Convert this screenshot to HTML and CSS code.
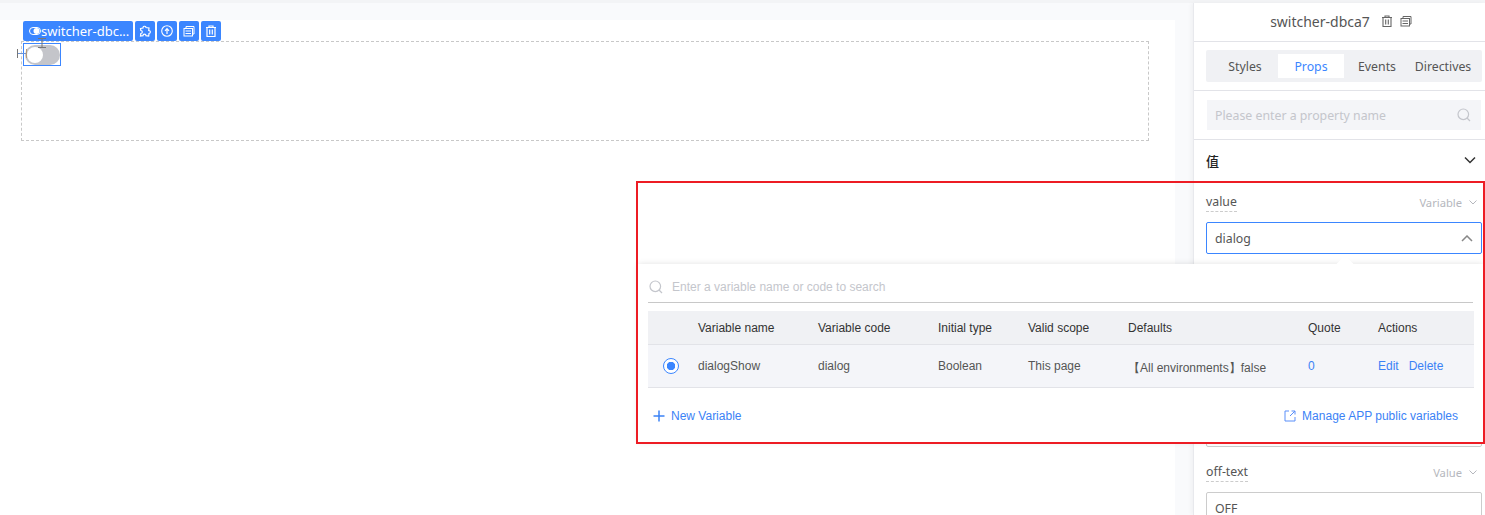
FILE: index.html
```html
<!DOCTYPE html>
<html lang="en">
<head>
    <meta charset="UTF-8">
    <meta name="viewport" content="width=device-width, initial-scale=1.0">
    <title>switcher-dbca7</title>
    <link rel="stylesheet" href="styles.css">
</head>
<body>
    <div class="app">
        <main class="stage">
            <div class="canvas">
                <div class="drop-zone"></div>

                <!-- selected component toolbar -->
                <div class="tool-bar">
                    <div class="tool-name">
                        <svg class="name-icon" viewBox="0 0 12 12" width="12" height="12"><rect x="0.5" y="2.5" width="11" height="7" rx="3.5" fill="none" stroke="#fff"/><circle cx="7.5" cy="6" r="3" fill="#fff"/></svg>
                        <span>switcher-dbc...</span>
                    </div>
                    <button class="tool-btn">
                        <svg viewBox="0 0 14 14" width="14" height="14"><path d="M2.5 4.5 5 4a1.5 1.5 0 0 1 3-.5l3 .5-.3 2.5a1.5 1.5 0 0 1 .3 3l-.3 2.5-2.7-.3a1.5 1.5 0 0 0-3 0L2.5 12l.3-2.5a1.5 1.5 0 0 0 0-3z" fill="none" stroke="#fff" stroke-width="1.2"/></svg>
                    </button>
                    <button class="tool-btn">
                        <svg viewBox="0 0 14 14" width="14" height="14"><circle cx="7" cy="7" r="5.3" fill="none" stroke="#fff" stroke-width="1.1"/><path d="M7 10V5M5 6.8 7 4.6l2 2.2" fill="none" stroke="#fff" stroke-width="1.2"/></svg>
                    </button>
                    <button class="tool-btn">
                        <svg viewBox="0 0 14 14" width="14" height="14"><path d="M4 4V2.5h8V10h-1.5" fill="none" stroke="#fff"/><rect x="2" y="4.5" width="8.5" height="7.5" fill="none" stroke="#fff"/><path d="M3.5 7H9M3.5 9.5H9" stroke="#fff"/></svg>
                    </button>
                    <button class="tool-btn">
                        <svg viewBox="0 0 14 14" width="14" height="14"><path d="M2 3.5h10M5 3.5V2h4v1.5M3 3.5v9h8v-9M5.7 5.5v5M8.3 5.5v5" fill="none" stroke="#fff" stroke-width="1.2"/></svg>
                    </button>
                </div>

                <div class="selected-box">
                    <div class="switcher"><span class="switcher-dot"></span></div>
                </div>
                <svg class="margin-mark margin-left" viewBox="0 0 10 9" width="10" height="9"><path d="M.5 0v9" stroke="#777"/><path d="M1 4.5h8" stroke="#6b93d6"/><path d="M9.5 0v9" stroke="#b59a7a"/></svg>
                <svg class="margin-mark margin-top" viewBox="0 0 8 10" width="8" height="10"><path d="M0 .5h8M0 9.5h8M4 1v8" stroke="#777" fill="none"/></svg>
            </div>
        </main>

        <aside class="panel">
            <div class="panel-head">
                <span class="panel-title">switcher-dbca7</span>
                <svg viewBox="0 0 14 14" width="14" height="14"><path d="M2 3.5h10M5 3.5V2h4v1.5M3 3.5v9h8v-9M5.7 5.5v5M8.3 5.5v5" fill="none" stroke="#666" stroke-width="1.1"/></svg>
                <svg viewBox="0 0 14 14" width="14" height="14"><path d="M4 4V2.5h8V10h-1.5" fill="none" stroke="#666"/><rect x="2" y="4.5" width="8.5" height="7.5" fill="none" stroke="#666"/><path d="M3.5 7H9M3.5 9.5H9" stroke="#666"/></svg>
            </div>
            <div class="tabs-row">
                <div class="tabs">
                    <div class="tab">Styles</div>
                    <div class="tab active">Props</div>
                    <div class="tab">Events</div>
                    <div class="tab">Directives</div>
                </div>
            </div>
            <div class="search-row">
                <div class="prop-search">
                    <span>Please enter a property name</span>
                    <svg viewBox="0 0 14 14" width="14" height="14"><circle cx="6.3" cy="6.3" r="5.3" fill="none" stroke="#c4c6cc" stroke-width="1.2"/><path d="M10 10l3 3" stroke="#c4c6cc" stroke-width="1.2"/></svg>
                </div>
            </div>
            <div class="section-head">
                <span>值</span>
                <svg viewBox="0 0 12 8" width="12" height="8"><path d="M1 1.5l5 5 5-5" fill="none" stroke="#333" stroke-width="1.5"/></svg>
            </div>
            <div class="field">
                <div class="field-label">
                    <span class="field-name">value</span>
                    <span class="field-mode">Variable
                        <svg viewBox="0 0 8 5" width="8" height="5"><path d="M.5.5 4 4 7.5.5" fill="none" stroke="#b5b7bd"/></svg>
                    </span>
                </div>
                <div class="field-input focused">
                    <span>dialog</span>
                    <svg viewBox="0 0 12 7" width="12" height="7"><path d="M1 6l5-5 5 5" fill="none" stroke="#888" stroke-width="1.5"/></svg>
                </div>
            </div>
            <div class="field-input hidden-input"></div>
            <div class="field">
                <div class="field-label">
                    <span class="field-name">off-text</span>
                    <span class="field-mode">Value
                        <svg viewBox="0 0 8 5" width="8" height="5"><path d="M.5.5 4 4 7.5.5" fill="none" stroke="#b5b7bd"/></svg>
                    </span>
                </div>
                <div class="field-input"><span>OFF</span></div>
            </div>
        </aside>
    </div>

    <!-- variable picker popup -->
    <div class="popup">
        <div class="popup-arrow"></div>
        <div class="popup-search">
            <svg viewBox="0 0 14 14" width="14" height="14"><circle cx="6.3" cy="6.3" r="5.3" fill="none" stroke="#c4c6cc" stroke-width="1.2"/><path d="M10 10l3 3" stroke="#c4c6cc" stroke-width="1.2"/></svg>
            <span>Enter a variable name or code to search</span>
        </div>
        <div class="var-table">
            <div class="var-row var-header">
                <span></span>
                <span>Variable name</span>
                <span>Variable code</span>
                <span>Initial type</span>
                <span>Valid scope</span>
                <span>Defaults</span>
                <span>Quote</span>
                <span>Actions</span>
            </div>
            <div class="var-row var-body">
                <span class="radio"></span>
                <span>dialogShow</span>
                <span>dialog</span>
                <span>Boolean</span>
                <span>This page</span>
                <span class="defaults">【All environments】false</span>
                <span class="link">0</span>
                <span class="actions"><span class="link">Edit</span><span class="link">Delete</span></span>
            </div>
        </div>
        <div class="popup-foot">
            <span class="link foot-link">
                <svg viewBox="0 0 12 12" width="12" height="12"><path d="M6 .5v11M.5 6h11" stroke="#3b82f6" stroke-width="1.5"/></svg>
                New Variable
            </span>
            <span class="link foot-link">
                <svg viewBox="0 0 12 12" width="12" height="12"><path d="M5 1H1v10h10V7M6 6l5-5M7.5 1H11v3.5" fill="none" stroke="#5b8ff9"/></svg>
                Manage APP public variables
            </span>
        </div>
    </div>

    <div class="red-frame"></div>
</body>
</html>
```

FILE: styles.css
```css
* {
    box-sizing: border-box;
}
body {
    margin: 0;
    height: 515px;
    overflow: hidden;
    background-color: #fff;
    font-family: "Noto Sans", sans-serif;
    font-size: 12.3px;
    color: #555;
}
.app {
    display: flex;
    height: 515px;
    border-top: 3px solid #f3f4f6;
}
.stage {
    flex: 1;
    padding: 17px 18px 0 0;
    background-color: #f9fafc;
}
.canvas {
    position: relative;
    height: 100%;
    background-color: #fff;
    padding: 21px 26px 0 21px;
}
.drop-zone {
    height: 100px;
    border: 1px dashed #c8c8c8;
}
.tool-bar {
    position: absolute;
    top: 1px;
    left: 23px;
    display: flex;
    gap: 2px;
}
.tool-name {
    display: flex;
    align-items: center;
    width: 110px;
    height: 20px;
    padding-left: 6px;
    background-color: #3b86ff;
    border-radius: 2px;
    color: #fff;
    font-size: 13px;
    white-space: nowrap;
}
.tool-btn {
    display: flex;
    align-items: center;
    justify-content: center;
    width: 20px;
    height: 20px;
    padding: 0;
    border: none;
    border-radius: 2px;
    background-color: #3b86ff;
}
.selected-box {
    position: absolute;
    top: 23px;
    left: 23px;
    width: 38px;
    height: 23px;
    padding: 1px 0 0 1px;
    border: 1px solid #3b86ff;
}
.switcher {
    display: flex;
    align-items: center;
    width: 35px;
    height: 20px;
    padding-left: 2px;
    border-radius: 10px;
    background-color: #c4c5ca;
}
.switcher-dot {
    width: 16px;
    height: 16px;
    border-radius: 50%;
    background-color: #fff;
}
.margin-mark {
    position: absolute;
}
.margin-left {
    top: 29px;
    left: 17px;
}
.margin-top {
    top: 18px;
    left: 38px;
}
.panel {
    width: 292px;
    border-left: 1px solid #e8e9ed;
    box-shadow: -2px 0 4px rgba(0, 0, 0, 0.04);
    background-color: #fff;
}
.panel-head {
    display: flex;
    align-items: center;
    justify-content: center;
    gap: 5px;
    height: 39px;
    padding: 0 0 2px 4px;
    border-bottom: 1px solid #e2e3e8;
}
.panel-title {
    margin-right: 5px;
    font-size: 14px;
}
.tabs-row {
    height: 49px;
    padding: 8px 3px 0 12px;
    border-bottom: 1px solid #e2e3e8;
}
.tabs {
    display: flex;
    height: 32px;
    padding: 4px 0 4px 6px;
    background-color: #f0f1f4;
    border-radius: 2px;
}
.tab {
    width: 66px;
    padding-top: 1px;
    line-height: 24px;
    text-align: center;
}
.tab.active {
    background-color: #fff;
    color: #3b86ff;
}
.search-row {
    height: 49px;
    padding: 9px 4px 0 13px;
    border-bottom: 1px solid #e2e3e8;
}
.prop-search {
    display: flex;
    align-items: center;
    justify-content: space-between;
    height: 30px;
    padding: 0 10px 0 8px;
    background-color: #f4f5f8;
    color: #c4c6cc;
}
.section-head {
    display: flex;
    align-items: center;
    justify-content: space-between;
    height: 40px;
    padding: 0 9px 0 12px;
    color: #222;
    font-family: "Noto Sans CJK SC", sans-serif;
    font-size: 13px;
    font-weight: 500;
}
.field {
    padding: 11px 3px 0 12px;
}
.field-label {
    display: flex;
    align-items: center;
    justify-content: space-between;
    height: 22px;
    margin-bottom: 9px;
}
.field-name {
    border-bottom: 1px dashed #ccc;
    line-height: 19px;
}
.field-mode {
    display: flex;
    align-items: center;
    gap: 7px;
    padding-right: 5px;
    color: #b5b7bd;
    font-size: 11.2px;
}
.field-input {
    display: flex;
    align-items: center;
    justify-content: space-between;
    height: 32px;
    padding: 0 8px;
    border: 1px solid #ccc;
    border-radius: 2px;
}
.field-input.focused {
    border-color: #3b86ff;
}
.hidden-input {
    margin: 161px 3px 3px 12px;
}
.popup {
    position: absolute;
    top: 264px;
    left: 638px;
    width: 845px;
    height: 178px;
    padding: 0 10px;
    background-color: #fff;
    box-shadow: 0 0 6px rgba(0, 0, 0, 0.12);
    font-family: "Liberation Sans", sans-serif;
    font-size: 12px;
    color: #555;
}
.popup-arrow {
    position: absolute;
    top: -6px;
    left: 701px;
    width: 12px;
    height: 12px;
    background-color: #fff;
    transform: rotate(45deg);
}
.popup-search {
    position: relative;
    display: flex;
    align-items: center;
    gap: 9px;
    height: 39px;
    padding: 8px 0 0 1px;
    border-bottom: 1px solid #c8c8c8;
    color: #c4c6cc;
}
.var-table {
    margin-top: 8px;
    margin-right: -1px;
}
.var-row {
    display: grid;
    grid-template-columns: 50px 120px 120px 90px 100px 180px 70px 1fr;
    align-items: center;
    border-bottom: 1px solid #e2e3e8;
}
.var-header {
    height: 34px;
    background-color: #f0f1f4;
    color: #333;
}
.var-body {
    height: 43px;
    background-color: #f4f5f9;
}
.radio {
    width: 16px;
    height: 16px;
    margin-left: 15px;
    border: 1px solid #3b86ff;
    border-radius: 50%;
    background: radial-gradient(circle, #3b86ff 0, #3b86ff 4px, #fff 4.5px);
}
.defaults {
    margin-top: 4px;
}
.actions {
    display: flex;
    gap: 10px;
}
.link {
    color: #3b82f6;
}
.popup-foot {
    display: flex;
    align-items: center;
    justify-content: space-between;
    height: 55px;
    padding: 0 15px 0 5px;
}
.foot-link {
    display: flex;
    align-items: center;
    gap: 6px;
}
.red-frame {
    position: absolute;
    top: 181px;
    left: 636px;
    width: 849px;
    height: 263px;
    border: 2px solid #ed1c24;
    pointer-events: none;
}
```
